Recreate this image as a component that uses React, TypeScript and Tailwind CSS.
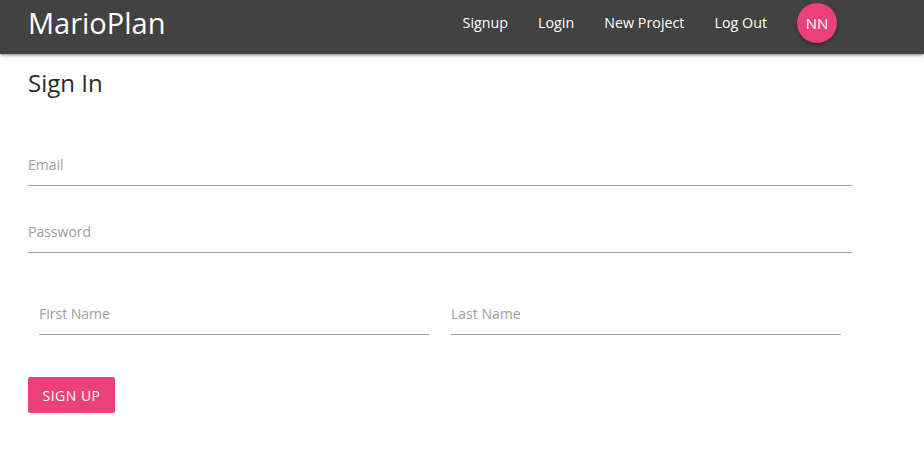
import React from "react";

const font = { fontFamily: '"Open Sans", "Noto Sans", sans-serif' };

function Field({ label }: { label: string }) {
  return (
    <div className="border-b border-[#9e9e9e] pt-[1px] pb-[10px]">
      <div className="text-[14px] leading-[20px] text-[#9e9e9e]">{label}</div>
    </div>
  );
}

export default function App() {
  return (
    <div className="min-h-[465px] w-[924px] bg-white" style={font}>
      <nav className="relative z-10 h-[54px] bg-[#424242] shadow-[0_2px_2px_0_rgba(0,0,0,0.14),0_3px_1px_-2px_rgba(0,0,0,0.12),0_1px_5px_0_rgba(0,0,0,0.2)]">
        <div className="ml-[28px] flex h-[46px] w-[824px] items-center justify-between">
          <a className="text-[29px] leading-[46px] text-white">MarioPlan</a>
          <ul className="flex items-center text-[14.3px] text-white">
            <li className="px-[15px]">Signup</li>
            <li className="px-[15px]">Login</li>
            <li className="px-[15px]">New Project</li>
            <li className="px-[15px]">Log Out</li>
            <li className="px-[15px]">
              <div className="flex h-[40px] w-[40px] items-center justify-center rounded-full bg-[#ec407a] text-[15px] text-white shadow-[0_2px_2px_0_rgba(0,0,0,0.14),0_3px_1px_-2px_rgba(0,0,0,0.12),0_1px_5px_0_rgba(0,0,0,0.2)]">
                NN
              </div>
            </li>
          </ul>
        </div>
      </nav>
      <main className="ml-[28px] w-[824px]">
        <h5 className="mt-[13px] text-[24px] leading-[32px] text-[#2b2b2b]">Sign In</h5>
        <div className="mt-[55px]">
          <Field label="Email" />
        </div>
        <div className="mt-[35px]">
          <Field label="Password" />
        </div>
        <div className="mt-[50px] flex">
          <div className="w-1/2 px-[11px]">
            <Field label="First Name" />
          </div>
          <div className="w-1/2 px-[11px]">
            <Field label="Last Name" />
          </div>
        </div>
        <button className="mt-[42px] flex h-[36px] w-[87px] items-center justify-center rounded-[2px] bg-[#ec407a] text-[14px] uppercase tracking-[0.5px] text-white">
          Sign Up
        </button>
      </main>
    </div>
  );
}
